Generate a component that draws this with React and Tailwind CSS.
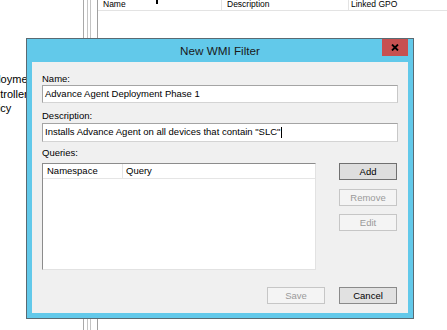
import React from 'react';

const font = { fontFamily: '"Liberation Sans", Arial, sans-serif' };

function Btn({ label, disabled, primary }) {
  return (
    <div
      className={`w-[58px] h-[17px] flex items-center justify-center text-[9.5px] leading-none border ${
        disabled
          ? 'border-[#c6c6c6] bg-[#f4f4f4] text-[#9a9a9a]'
          : primary
          ? 'border-[#707070] bg-[#dedede] text-black'
          : 'border-[#8a8a8a] bg-[#e1e1e1] text-black'
      }`}
    >
      {label}
    </div>
  );
}

function TextBox({ value, caret, h }) {
  return (
    <div
      className={`${h} w-full bg-white border border-[#a4a4a4] border-b-[#d4d4d4] border-r-[#c8c8c8] flex items-center pl-[2px] text-[9.5px] text-black whitespace-nowrap overflow-hidden`}
    >
      <span>{value}</span>
      {caret && <span className="inline-block w-px h-[11px] bg-black ml-px" />}
    </div>
  );
}

export default function App() {
  return (
    <div className="relative w-[447px] h-[330px] bg-white overflow-hidden" style={font}>
      {/* Background console */}
      <div className="flex h-full">
        <div className="w-[83px] overflow-hidden pt-[72px] text-[11px] leading-[14.5px] text-black whitespace-nowrap">
          <div className="ml-[-22px]">Deployment</div>
          <div className="ml-[-20px]">Controllers</div>
          <div className="ml-[-18px]">Policy</div>
        </div>
        <div className="w-px h-full bg-[#a9a9a9]" />
        <div className="w-[3px]" />
        <div className="w-px h-full bg-[#c4c4c4]" />
        <div className="w-[2px]" />
        <div className="w-px h-full bg-[#c4c4c4]" />
        <div className="w-[6px]" />
        <div className="flex-1 h-full border-l border-[#a0a0a0]">
          <div className="flex h-[11px] border-b border-[#e3e3e3] text-[8.5px] leading-[10px] text-black overflow-hidden">
            <div className="w-[124px] pl-[5px] border-r border-[#e3e3e3] -mt-[1px]">Name</div>
            <div className="w-[127px] pl-[5px] border-r border-[#e3e3e3] -mt-[1px]">Description</div>
            <div className="flex-1 pl-[2px] -mt-[1px]">Linked GPO</div>
          </div>
        </div>
      </div>
      <div className="absolute left-[156px] top-0 w-[2px] h-[4px] bg-black" />

      {/* Dialog window */}
      <div className="absolute left-[26px] top-[38px] w-[388px] h-[281px] border border-[#5a6a72] bg-[#62c9ea] flex flex-col">
        <div className="relative h-[23px] flex items-center justify-center text-[11.7px] text-[#1a1a1a]">
          New WMI Filter
          <div className="absolute right-[5px] top-0 w-[26px] h-[17px] bg-[#c75050] flex items-center justify-center">
            <svg width="8" height="7" viewBox="0 0 8 7">
              <path d="M1 0.5 L7 6.5 M7 0.5 L1 6.5" stroke="#000" strokeWidth="1.8" />
            </svg>
          </div>
        </div>
        <div className="mx-[5px] mb-[5px] flex-1 bg-[#f0f0f0] px-[10px] flex flex-col">
          <div className="mt-[10px] h-[13px] leading-[13px] text-[9.5px] text-black">Name:</div>
          <TextBox h="h-[18px]" value="Advance Agent Deployment Phase 1" />
          <div className="mt-[6px] h-[14px] leading-[14px] text-[9.5px] text-black">Description:</div>
          <TextBox h="h-[19px]" value={'Installs Advance Agent on all devices that contain "SLC"'} caret />
          <div className="mt-[4px] h-[14px] leading-[14px] text-[9.5px] text-black">Queries:</div>
          <div className="mt-[3px] flex">
            <div className="w-[274px] h-[107px] bg-white border border-[#8c8c8c] border-r-[#e2e2e2] border-b-[#e2e2e2] flex flex-col">
              <div className="flex h-[15px] border-b border-[#e5e5e5] text-[9.5px] leading-[14px] text-black">
                <div className="w-[80px] pl-[4px] border-r border-[#e5e5e5]">Namespace</div>
                <div className="pl-[3px]">Query</div>
              </div>
            </div>
            <div className="ml-[23px] flex flex-col">
              <Btn label="Add" primary />
              <div className="mt-[9px]">
                <Btn label="Remove" disabled />
              </div>
              <div className="mt-[8px]">
                <Btn label="Edit" disabled />
              </div>
            </div>
          </div>
          <div className="mt-[17px] flex justify-end gap-[14px] pr-px">
            <Btn label="Save" disabled />
            <Btn label="Cancel" />
          </div>
        </div>
      </div>
    </div>
  );
}
